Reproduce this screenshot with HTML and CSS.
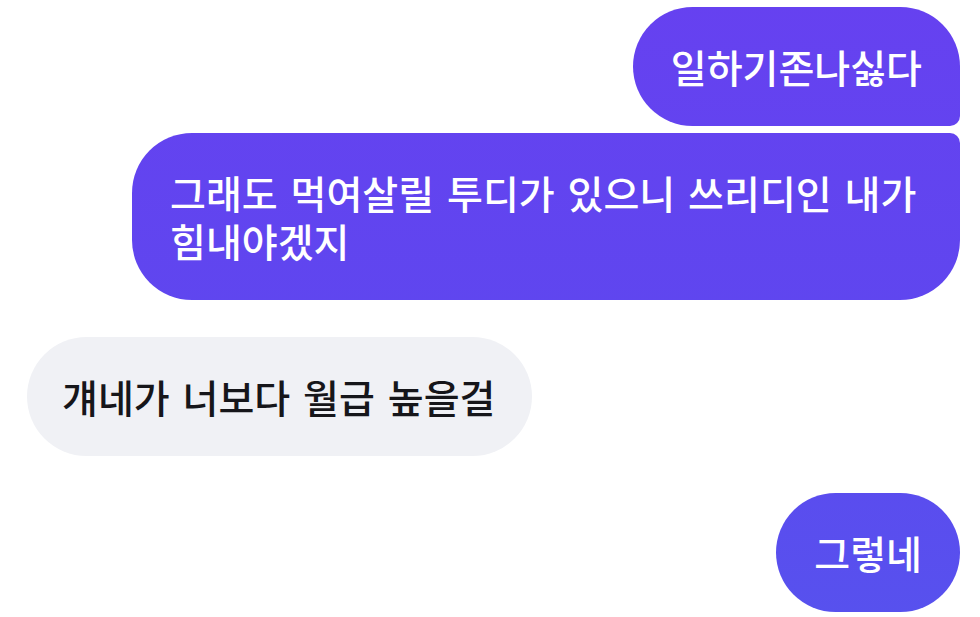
FILE: index.html
```html
<!DOCTYPE html>
<html lang="ko">
<head>
    <meta charset="utf-8">
    <meta name="viewport" content="width=device-width, initial-scale=1.0">
    <title>채팅</title>
    <link rel="stylesheet" href="styles.css">
</head>
<body>
    <div class="chat">
        <div class="group mine">
            <div class="bubble first">일하기존나싫다</div>
            <div class="bubble last">그래도 먹여살릴 투디가 있으니 쓰리디인 내가 힘내야겠지</div>
        </div>
        <div class="group theirs">
            <div class="bubble">걔네가 너보다 월급 높을걸</div>
        </div>
        <div class="group mine">
            <div class="bubble">그렇네</div>
        </div>
    </div>
</body>
</html>
```

FILE: styles.css
```css
body {
    margin: 0;
    padding: 7px 20px 0 27px;
    background: #fff;
    font-family: "Noto Sans CJK KR", "Noto Sans", sans-serif;
}
.chat {
    display: flex;
    flex-direction: column;
    gap: 37px;
}
.group {
    display: flex;
    flex-direction: column;
    gap: 7px;
}
.mine { align-items: flex-end; }
.theirs { align-items: flex-start; }
.bubble {
    box-sizing: border-box;
    max-width: 828px;
    padding: 35px 38px 36px 38px;
    border-radius: 60px;
    font-size: 39px;
    font-weight: 500;
    line-height: 48px;
    word-spacing: 2px;
}
.mine .bubble {
    color: #fff;
    background: linear-gradient(180deg, #6641f0 0%, #5f46ef 50%, #5751ee 100%);
    background-attachment: fixed;
}
.theirs .bubble {
    color: #16161a;
    background: #f0f1f5;
    padding-left: 35px;
    padding-right: 37px;
}
.mine .first { border-bottom-right-radius: 10px; }
.mine .last { border-top-right-radius: 10px; }
```
